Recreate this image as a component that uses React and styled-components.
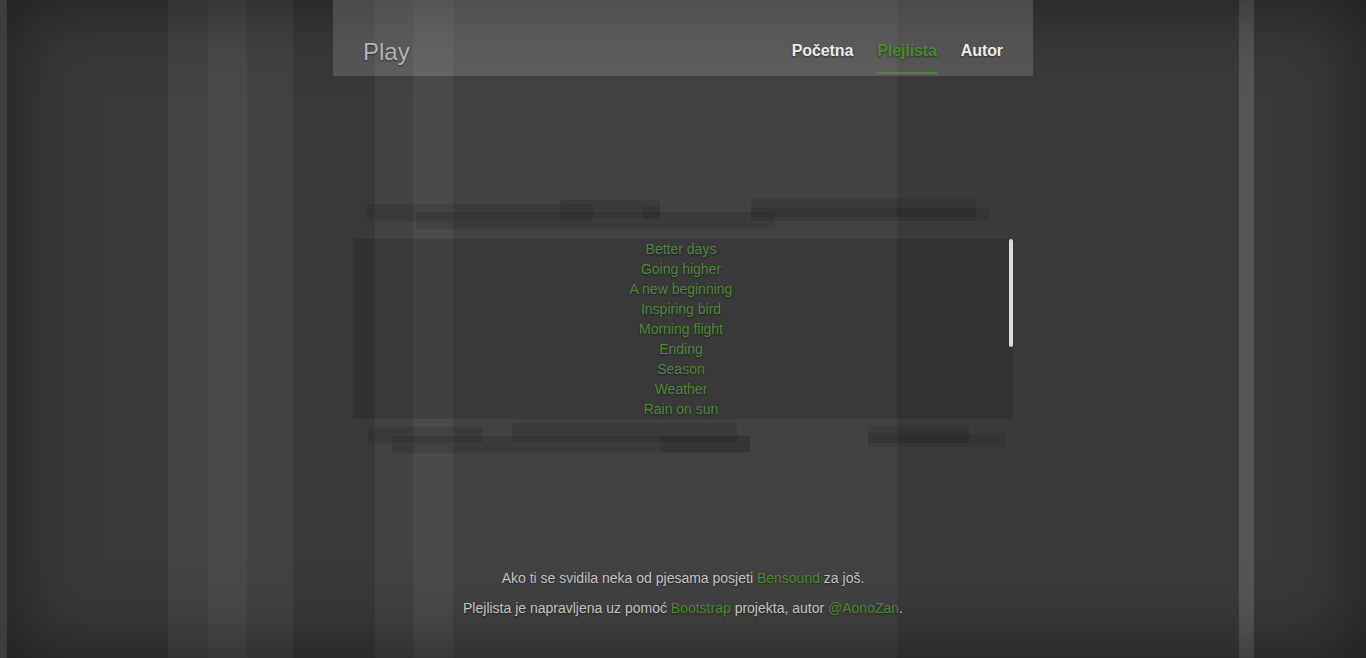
import { useState } from 'react';
import styled, { createGlobalStyle } from 'styled-components';

const GlobalStyle = createGlobalStyle`
    html, body {
        margin: 0;
        padding: 0;
        height: 100%;
    }
    body {
        background: linear-gradient(to right,
            #3e3e3e 0 7px,
            #393939 7px 168px,
            #434343 168px 208px,
            #494949 208px 247px,
            #424242 247px 293px,
            #393939 293px 375px,
            #424242 375px 413px,
            #4a4a4a 413px 453px,
            #424242 453px 897px,
            #3a3a3a 897px 1239px,
            #555555 1239px 1254px,
            #393939 1254px 100%);
        font-family: "Liberation Sans", Arial, sans-serif;
        text-shadow: 0 1px 2px rgba(0, 0, 0, 0.5);
    }
`

const Cover = styled.div`
    position: relative;
    min-height: 100vh;
    display: flex;
    flex-direction: column;
    align-items: center;

    &::before {
        content: '';
        position: absolute;
        top: 0;
        bottom: 0;
        left: 7px;
        right: 0;
        box-shadow: inset 0 0 5rem rgba(0, 0, 0, 0.5);
        pointer-events: none;
    }
`

const Masthead = styled.header`
    position: relative;
    width: 700px;
    height: 76px;
    box-sizing: border-box;
    padding: 0 30px;
    display: flex;
    align-items: flex-end;
    justify-content: space-between;
    background: rgba(255, 255, 255, 0.15);
`

const Brand = styled.h3`
    margin: 0 0 12px;
    font-size: 24px;
    line-height: 24px;
    font-weight: 400;
    color: #b4b4b4;
`

const Nav = styled.nav`
    display: flex;
    gap: 24px;
    margin-bottom: 2px;
`

const NavLink = styled.a`
    display: block;
    font-size: 16px;
    line-height: 20px;
    font-weight: 700;
    letter-spacing: -0.1px;
    padding-bottom: 11px;
    border-bottom: 2px solid ${p => p.$active ? '#4b8a30' : 'transparent'};
    color: ${p => p.$active ? '#4a8a2d' : '#ececec'};
    text-decoration: none;
    cursor: pointer;
`

const Stage = styled.main`
    position: relative;
    width: 660px;
    margin-top: 120px;
    display: flex;
    flex-direction: column;
`

const Bars = styled.svg`
    display: block;
    width: 660px;
    height: ${p => p.$h}px;
`

const ListFrame = styled.div`
    position: relative;
    height: 180px;
    background: rgba(0, 0, 0, 0.13);
`

const Playlist = styled.ul`
    list-style: none;
    margin: 0;
    padding: 0 4px 0 0;
    height: 100%;
    overflow-y: auto;
    scrollbar-width: none;
    text-align: center;
`

const Thumb = styled.div`
    position: absolute;
    right: 0;
    width: 4px;
    height: 108px;
    border-radius: 2px;
    background: #dcdcdc;
    box-shadow: 0 0 1px rgba(0, 0, 0, 0.6);
`

const Song = styled.li`
    font-size: 14px;
    line-height: 20px;
    color: #4f8a37;
    cursor: pointer;
`

const Footer = styled.footer`
    position: relative;
    margin-top: auto;
    padding-bottom: 30px;
    text-align: center;
    font-size: 14px;
    line-height: 20px;
    color: #c4c4c4;

    p {
        margin: 0 0 10px;
    }
`

const Link = styled.a`
    color: #4c8a32;
    text-decoration: none;
`

const songs = [
    'Better days', 'Going higher', 'A new beginning', 'Inspiring bird',
    'Morning flight', 'Ending', 'Season', 'Weather', 'Rain on sun',
    'Sunny', 'Memories', 'Sweet', 'Tenderness', 'Happiness', 'Slow motion'
];

const topBars = [
    [14, 8, 226, 17], [63, 16, 359, 17], [207, 4, 100, 18],
    [290, 10, 17, 14], [398, 3, 225, 18], [398, 12, 238, 13]
];

const bottomBars = [
    [15, 8, 115, 16], [39, 17, 358, 17], [159, 4, 225, 19],
    [307, 16, 90, 17], [515, 6, 101, 18], [515, 14, 137, 14]
];

const Wave = function({ bars, h }){
    return(
        <Bars $h={h} viewBox={`0 0 660 ${h}`}>
            {bars.map(([x, y, w, bh], i) => (
                <rect key={i} x={x} y={y} width={w} height={bh} rx="1" fill="rgba(0,0,0,0.1)" />
            ))}
        </Bars>
    );
}

const App = function(){
    const [thumbTop, setThumbTop] = useState(0);

    const onScroll = (e) => {
        const el = e.currentTarget;
        const max = el.scrollHeight - el.clientHeight;
        setThumbTop(max > 0 ? (el.scrollTop / max) * (el.clientHeight - 108) : 0);
    };

    return(
    <Cover>
        <GlobalStyle />
        <Masthead>
            <Brand>Play</Brand>
            <Nav>
                <NavLink>Početna</NavLink>
                <NavLink $active>Plejlista</NavLink>
                <NavLink>Autor</NavLink>
            </Nav>
        </Masthead>
        <Stage>
            <Wave bars={topBars} h={43} />
            <ListFrame>
                <Playlist onScroll={onScroll}>
                    {songs.map(s => <Song key={s}>{s}</Song>)}
                </Playlist>
                <Thumb style={{ top: thumbTop }} />
            </ListFrame>
            <Wave bars={bottomBars} h={37} />
        </Stage>
        <Footer>
            <p>Ako ti se svidila neka od pjesama posjeti <Link>Bensound</Link> za još.</p>
            <p>Plejlista je napravljena uz pomoć <Link>Bootstrap</Link> projekta, autor <Link>@AonoZan</Link>.</p>
        </Footer>
    </Cover>
    );
}

export default App;
